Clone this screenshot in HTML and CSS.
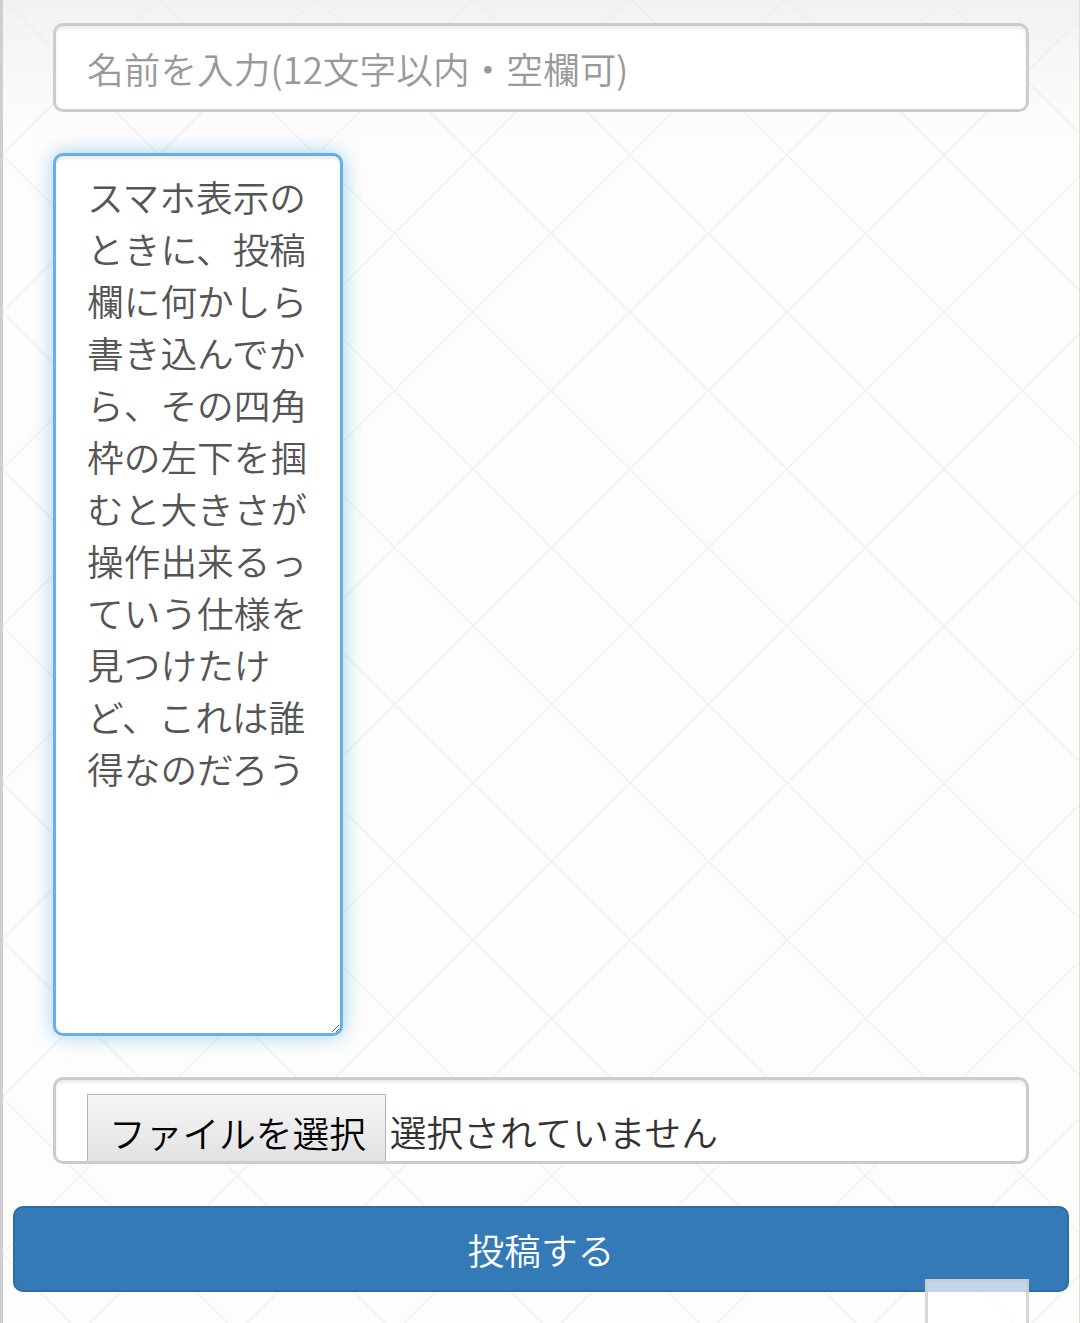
FILE: index.html
```html
<!DOCTYPE html>
<html lang="ja">
<head>
    <meta charset="UTF-8">
    <meta name="viewport" content="width=device-width, initial-scale=1.0">
    <title>投稿フォーム</title>
    <link rel="stylesheet" href="styles.css">
</head>
<body>
    <div class="page">
        <form class="post-form" onsubmit="return false;">
            <input type="text" class="form-control name" placeholder="名前を入力(12文字以内・空欄可)">
            <textarea class="form-control message">スマホ表示のときに、投稿欄に何かしら書き込んでから、その四角枠の左下を掴むと大きさが操作出来るっていう仕様を見つけたけど、これは誰得なのだろう</textarea>
            <div class="form-control file-box">
                <span class="file-button">ファイルを選択</span>
                <span class="file-name">選択されていません</span>
            </div>
            <button type="submit" class="btn-submit">投稿する</button>
        </form>
        <div class="to-top"></div>
    </div>
</body>
</html>
```

FILE: styles.css
```css
html, body {
    margin: 0;
    padding: 0;
}
body {
    font-family: "Noto Sans CJK JP", "Noto Sans", sans-serif;
    font-weight: 350;
    background-color: #fdfdfc;
    overflow: hidden;
}
.page {
    position: relative;
    min-height: 1323px;
    box-sizing: border-box;
    border-left: 3px solid #cfcfcf;
    border-right: 1px solid #dedede;
    padding: 23px 10px 0 10px;
    background-color: #fdfdfc;
    background-image:
        linear-gradient(to bottom, rgba(235,235,235,.6), rgba(253,253,252,0) 140px),
        linear-gradient(45deg, transparent calc(50% - 1px), #f4f4f3 calc(50% - 1px), #f4f4f3 calc(50% + 1px), transparent calc(50% + 1px)),
        linear-gradient(-45deg, transparent calc(50% - 1px), #f4f4f3 calc(50% - 1px), #f4f4f3 calc(50% + 1px), transparent calc(50% + 1px));
    background-size: 100% 140px, 157px 157px, 157px 157px;
    background-repeat: no-repeat, repeat, repeat;
    background-position: 0 0, -1px -2px, -1px -2px;
}
.post-form {
    display: flex;
    flex-direction: column;
}
.form-control {
    display: block;
    box-sizing: border-box;
    margin: 0 40px;
    width: calc(100% - 80px);
    border: 3px solid #cccccc;
    border-radius: 10px;
    background: #fff;
    box-shadow: inset 0 3px 3px rgba(0,0,0,.075);
    font-family: inherit;
    font-weight: 350;
    font-size: 36.7px;
    line-height: 52px;
    color: #555;
    padding: 16px 31px;
    outline: none;
}
.form-control::placeholder {
    color: #999;
}
.name {
    height: 89px;
}
.message {
    margin-top: 41px;
    width: 290px;
    height: 883px;
    padding-top: 14px;
    resize: both;
    border-color: #66afe9;
    box-shadow: inset 0 3px 3px rgba(0,0,0,.075), 0 0 20px rgba(102,175,233,.6);
    overflow: hidden;
}
.file-box {
    margin-top: 41px;
    height: 87px;
    padding: 14px 0 0 31px;
    overflow: hidden;
    display: flex;
    align-items: flex-start;
    gap: 4px;
}
.file-button {
    display: block;
    box-sizing: border-box;
    height: 80px;
    padding: 6px 19px 0 21px;
    border: 1px solid #b4b4b4;
    background: linear-gradient(to bottom, #f6f6f6, #dedede);
    color: #000;
    font-weight: 350;
    font-size: 36.7px;
    line-height: 62px;
}
.file-name {
    display: block;
    color: #333;
    font-size: 36.7px;
    line-height: 62px;
    padding-top: 6px;
}
.btn-submit {
    margin-top: 42px;
    height: 86px;
    box-sizing: border-box;
    border: 2px solid #2e6da4;
    border-radius: 10px;
    background-color: #337ab7;
    color: #fff;
    font-family: inherit;
    font-weight: 350;
    font-size: 36.7px;
    cursor: pointer;
}
.to-top {
    position: absolute;
    left: 922px;
    top: 1279px;
    width: 104px;
    height: 60px;
    box-sizing: border-box;
    border: 3px solid rgba(200,200,200,.75);
    background: rgba(255,255,255,.7);
}
```
